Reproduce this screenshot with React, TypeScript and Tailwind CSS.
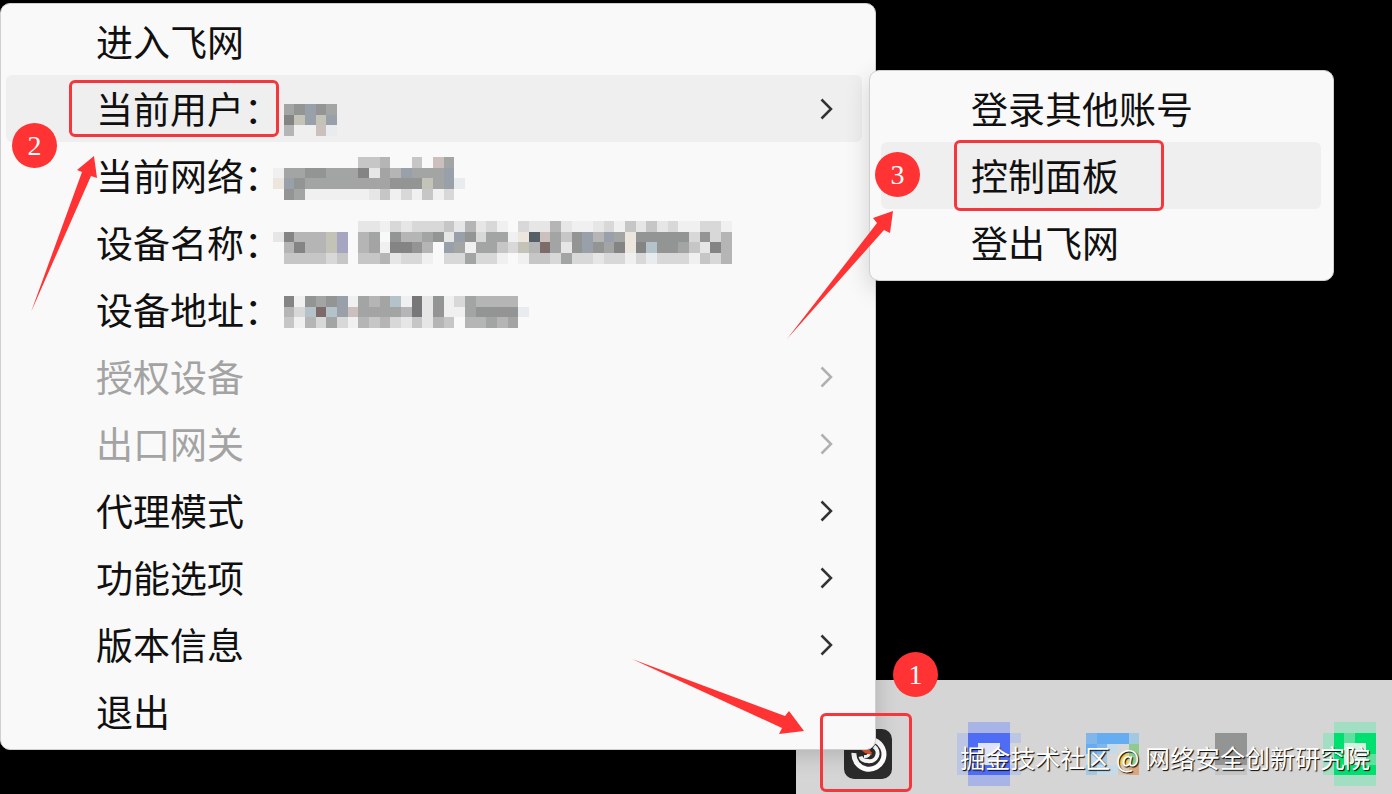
import type { ReactNode } from "react";

type MenuEntry = {
  label: string;
  mosaic?: string[];
  mosaicTop?: number;
  submenu?: boolean;
  disabled?: boolean;
  active?: boolean;
  mark?: string;
};

// one character per mosaic block, anything missing here stays transparent
const COLORS: Record<string, string> = {
  "7": "#77777a",
  "8": "#848484",
  "9": "#939494",
  a: "#a3a4a4",
  b: "#b5b5b5",
  c: "#c6c6c6",
  d: "#d8d8d8",
  e: "#e6e6e6",
  f: "#f0f0f0",
  B: "#9aa0a9",
  C: "#c4c3b8",
  L: "#b4c3ca",
  N: "#565e66",
  P: "#cbc0bd",
  R: "#7c6b69",
  S: "#e8ecef",
  V: "#a6a5c2",
  W: "#ece6df",
  k: "#4f6cf5",
  K: "#a9b4e6",
  q: "#bcc5e2",
  w: "#dfe4fa",
  s: "#66acf0",
  t: "#80b6ea",
  u: "#a3c9e2",
  v: "#c5dbe8",
  g: "#8ecb8c",
  y: "#f2d25a",
  o: "#d9a680",
  p: "#e0c8b0",
  G: "#00e070",
  H: "#5fe09f",
  I: "#a2dfc2",
  J: "#d3f3e2",
};

const mainMenu: MenuEntry[] = [
  { label: "进入飞网" },
  {
    label: "当前用户：",
    mosaic: ["fa9B9a", ".8CBCB", ".b..PS"],
    mosaicTop: 29,
    submenu: true,
    active: true,
    mark: "inset-y-[5px] left-[63px]",
  },
  {
    label: "当前网络：",
    mosaic: [
      "........ccb..c.Pa.",
      "faa99aaa8eabBaaaB.",
      "WB9aaaaaaaa999CaBS",
      ".9affffffecfdfcfd.",
    ],
    mosaicTop: 15,
  },
  {
    label: "设备名称：",
    mosaic: [
      "........eefdedddcebedf.deebeffedfcecedffddf",
      "e8bbbCV.ba.9bba9eB9daafWNPac9BbBaW99999d9db",
      ".b8bbCV.baf889b.BafaacdCbRae9B9a8W8L99ace8b",
      ".ccccdc.ccbeddf.ddaddf.fccdaddeddfdSdddfcdb",
    ],
    mosaicTop: 12,
  },
  {
    label: "设备地址：",
    mosaic: [
      ".8f9a9BfabaLf7e9fdabbbb.",
      ".bdLRLBPaaaab7e9ffa9999S",
      ".cfbdadfbcbdecebc.bbaba.",
    ],
    mosaicTop: 20,
  },
  { label: "授权设备", submenu: true, disabled: true },
  { label: "出口网关", submenu: true, disabled: true },
  { label: "代理模式", submenu: true },
  { label: "功能选项", submenu: true },
  { label: "版本信息", submenu: true },
  { label: "退出" },
];

const userMenu: MenuEntry[] = [
  { label: "登录其他账号" },
  { label: "控制面板", active: true, mark: "-inset-y-0.5 left-[73px]" },
  { label: "登出飞网" },
];

const trayIcons = [
  { name: "会议", rows: [".KKKK.", "qkkkkq", "qkwwk.", "qkwwk.", "qkkkkq", ".KKKK."] },
  { name: "管家", rows: ["tsssu", "stvdg", "vudyg", "uvvpo"] },
  { name: "设备", rows: [".999.", ".999.", ".999.", ".ccc."] },
  { name: "微信", rows: [".IIII", "IGHGG", "IGJJG", "IGJJH", "IGGGG", ".IIII"] },
];

const BLOCK = 32 / 3;

function Mosaic({ rows, top = 0, height }: { rows: string[]; top?: number; height?: number }) {
  return (
    <svg
      width={rows[0].length * BLOCK}
      height={height ?? rows.length * BLOCK}
      shapeRendering="crispEdges"
      aria-hidden="true"
      className="shrink-0"
    >
      {rows.map((row, y) =>
        row.split("").map((c, x) =>
          COLORS[c] ? (
            <rect
              key={`${x}-${y}`}
              x={x * BLOCK}
              y={top + y * BLOCK}
              width={BLOCK}
              height={BLOCK}
              fill={COLORS[c]}
            />
          ) : null
        )
      )}
    </svg>
  );
}

function Chevron() {
  return (
    <svg width="14" height="22" viewBox="0 0 14 22" fill="none" aria-hidden="true" className="ml-auto shrink-0">
      <path d="M1.5 1.500 11 11 1.500 20.500" stroke="currentColor" strokeWidth="2.5" opacity="0.85" />
    </svg>
  );
}

function MenuItem({ item, children }: { item: MenuEntry; children?: ReactNode }) {
  return (
    <li className="relative">
      <button
        type="button"
        disabled={item.disabled}
        className={`relative flex h-[67px] w-full items-center rounded-md pr-7 pl-[90px] text-left ${
          item.active ? "bg-[#efefef]" : ""
        } ${item.disabled ? "text-[#a3a3a3]" : "text-[#101010]"}`}
      >
        <span className={item.mosaic ? "w-[177px] whitespace-nowrap" : "whitespace-nowrap"}>
          {item.label}
        </span>
        {item.mosaic && <Mosaic rows={item.mosaic} top={item.mosaicTop} height={67} />}
        {item.submenu && <Chevron />}
        {item.mark && (
          <span className={`absolute w-[210px] rounded-md border-[3px] border-[#f5363c] ${item.mark}`} />
        )}
      </button>
      {children}
    </li>
  );
}

function UserMenu() {
  return (
    <div className="absolute -top-[5px] left-full ml-[7px] w-[465px] rounded-[10px] border border-[#d0d0d0] bg-[#f9f9f9] py-1 pr-3 pl-[11px] shadow-[0_8px_24px_rgba(0,0,0,0.16)]">
      <ul>
        {userMenu.map((item) => (
          <MenuItem key={item.label} item={item} />
        ))}
      </ul>
    </div>
  );
}

function Badge({ children, className }: { children: string; className: string }) {
  return (
    <span
      className={`absolute flex size-[45px] items-center justify-center rounded-full bg-[#ff3333] font-['Liberation_Serif',serif] text-[28px] leading-none text-white ${className}`}
    >
      {children}
    </span>
  );
}

// three long arrows pointing at the steps
function Arrows() {
  return (
    <svg
      width="1392"
      height="794"
      viewBox="0 0 1392 794"
      fill="#ff3333"
      aria-hidden="true"
      className="pointer-events-none absolute inset-0"
    >
      <path d="M632 659 785 716 789 711 804 731 779 734 782 728Z" />
      <path d="M31 312 82 172 77 170 94 156 97 178 91 176Z" />
      <path d="M787 339 877 223 873 218 893 211 890 233 884 230Z" />
    </svg>
  );
}

function AppTrayIcon() {
  return (
    <svg width="48" height="50" viewBox="0 0 48 50" fill="none" aria-hidden="true">
      <rect width="48" height="50" rx="10" fill="#2b2b2b" />
      <path d="M31 11.500A15 15 0 1 1 10 24" stroke="#fff" strokeWidth="5" />
      <path d="M30 17.500A8 8 0 0 1 24 32C20 32 17 30 16.500 27.500" stroke="#fff" strokeWidth="4" />
      <path d="M20 27.500Q25 28 26 23" stroke="#fff" strokeWidth="3" />
      <path d="M16 20 26 21 28 26 21 24Z" fill="#e2552c" />
    </svg>
  );
}

export default function App() {
  return (
    <main className="relative flex min-h-screen items-start overflow-hidden bg-black pt-[3px] font-['Noto_Sans_CJK_SC',sans-serif] text-[37px] leading-none">
      {/* Main menu */}
      <nav className="relative z-10 w-[876px] shrink-0 rounded-[10px] border border-[#d0d0d0] bg-[#f9f9f9] py-1 pr-[13px] pl-[5px] shadow-[0_4px_24px_rgba(0,0,0,0.18)]">
        <ul>
          {mainMenu.map((item) => (
            <MenuItem key={item.label} item={item}>
              {item.active && <UserMenu />}
            </MenuItem>
          ))}
        </ul>
      </nav>

      {/* Taskbar, runs under the menu corner */}
      <footer className="absolute right-0 bottom-0 left-[796px] flex h-[114px] items-start gap-[65px] overflow-hidden bg-[#d5d5d5] pt-[42px] pl-12">
        <button type="button" aria-label="飞网" className="flex h-16 shrink-0 items-center">
          <AppTrayIcon />
        </button>
        {trayIcons.map((icon) => (
          <button
            key={icon.name}
            type="button"
            aria-label={icon.name}
            className="flex h-16 shrink-0 items-center"
          >
            <Mosaic rows={icon.rows} />
          </button>
        ))}
      </footer>

      {/* Step markers */}
      <div className="pointer-events-none absolute inset-0 z-20">
        <span className="absolute top-[713px] left-[820px] h-[79px] w-[92px] rounded-md border-[3px] border-[#f5363c]" />
        <Badge className="top-[652px] left-[893px]">1</Badge>
        <Badge className="top-[123px] left-3">2</Badge>
        <Badge className="top-[152px] left-[875px]">3</Badge>
        <Arrows />
      </div>

      {/* Watermark */}
      <p className="absolute right-[22px] bottom-[24px] z-20 text-[25px] whitespace-nowrap text-white [text-shadow:1px_1px_1px_#000]">
        掘金技术社区 @ 网络安全创新研究院
      </p>
    </main>
  );
}
